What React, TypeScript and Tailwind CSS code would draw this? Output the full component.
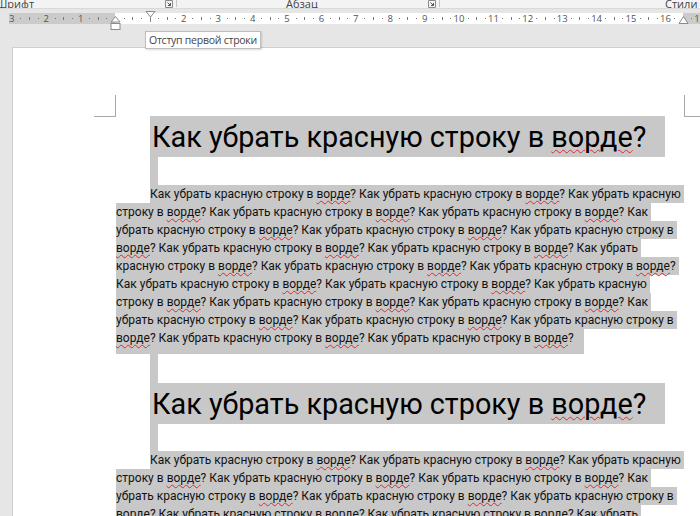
import React from 'react';

const SEL = 'bg-[#c8c8c8]';

const para = [
  'Как убрать красную строку в ворде? Как убрать красную строку в ворде? Как убрать красную',
  'строку в ворде? Как убрать красную строку в ворде? Как убрать красную строку в ворде? Как',
  'убрать красную строку в ворде? Как убрать красную строку в ворде? Как убрать красную строку в',
  'ворде? Как убрать красную строку в ворде? Как убрать красную строку в ворде? Как убрать',
  'красную строку в ворде? Как убрать красную строку в ворде? Как убрать красную строку в ворде?',
  'Как убрать красную строку в ворде? Как убрать красную строку в ворде? Как убрать красную',
  'строку в ворде? Как убрать красную строку в ворде? Как убрать красную строку в ворде? Как',
  'убрать красную строку в ворде? Как убрать красную строку в ворде? Как убрать красную строку в',
  'ворде? Как убрать красную строку в ворде? Как убрать красную строку в ворде?',
];

// spell-check squiggle under "ворде"
function Spell({ text }: { text: string }) {
  return (
    <>
      {text.split(/(ворде)/).map((part, i) =>
        part === 'ворде' ? (
          <span key={i} className="underline decoration-wavy decoration-[#e0282e] decoration-[1px] underline-offset-[2px]">
            {part}
          </span>
        ) : (
          <span key={i}>{part}</span>
        )
      )}
    </>
  );
}

function Heading() {
  return (
    <div className={`ml-[34px] w-fit h-[41px] pl-[2px] pr-[19px] pt-[2px] ${SEL} text-[28.8px] leading-[38px] font-normal text-black whitespace-nowrap`}>
      <Spell text="Как убрать красную строку в ворде?" />
    </div>
  );
}

function EmptyPara({ h }: { h: 'a' | 'b' | 'c' }) {
  const cls = h === 'a' ? 'h-[28px]' : h === 'b' ? 'h-[29px]' : 'h-[27px]';
  return (
    <div className={cls}>
      <div className={`ml-[34px] w-[8px] h-full ${SEL}`} />
    </div>
  );
}

function Body({ lines }: { lines: string[] }) {
  return (
    <div className="text-[12px] text-[#111]">
      {lines.map((l, i) => {
        const first = i === 0;
        const last = i === lines.length - 1 && lines.length === para.length;
        return (
          <div
            key={i}
            className={`w-fit whitespace-nowrap leading-[18px] ${SEL} ${first ? 'ml-[34px]' : ''} ${last ? 'h-[25px] pr-[10px]' : 'h-[18px] pr-[3px]'}`}
          >
            <Spell text={l} />
          </div>
        );
      })}
    </div>
  );
}

const CM = 34.4;
const ORIGIN = 115;

function Ruler() {
  const marks: React.ReactNode[] = [];
  for (let n = -3; n <= 17; n++) {
    const x = ORIGIN + CM * n;
    if (n !== 0 && n !== 1) {
      marks.push(
        <span
          key={`n${n}`}
          className="absolute top-0 -translate-x-1/2 text-[9.5px] leading-[11px] text-[#555]"
          style={{ left: x }}
        >
          {Math.abs(n)}
        </span>
      );
    }
    [0.25, 0.5, 0.75].forEach((q) => {
      const tx = ORIGIN + CM * (n + q);
      if (tx < 12 || tx > 698 || Math.abs(tx - 683) < 5) return;
      marks.push(
        q === 0.5 ? (
          <span key={`t${n}${q}`} className="absolute top-[4px] w-px h-[3px] bg-[#777]" style={{ left: Math.round(tx) }} />
        ) : (
          <span key={`t${n}${q}`} className="absolute top-[5px] w-px h-px bg-[#777]" style={{ left: Math.round(tx) }} />
        )
      );
    });
  }
  return (
    <div className="relative h-[38px] bg-[#e6e6e6]">
      <div className="flex mt-[4px] h-[11px]">
        <div className="w-[9px]" />
        <div className="w-[106px] bg-[#cbcbcb]" />
        <div className="w-[568px] bg-white" />
        <div className="flex-1 bg-[#cbcbcb]" />
      </div>
      <div className="absolute left-0 top-[4px] w-full h-[11px]">{marks}</div>

      {/* left indent / hanging indent */}
      <svg className="absolute left-[110px] top-[7px]" width="11" height="15" viewBox="0 0 11 15">
        <path d="M5.5 0.5 L10 6 L1 6 Z" fill="#fff" stroke="#8a8a8a" />
        <rect x="1" y="7.5" width="9" height="6" fill="#fff" stroke="#8a8a8a" />
      </svg>
      {/* first line indent */}
      <svg className="absolute left-[145px] top-[2px]" width="11" height="12" viewBox="0 0 11 12">
        <path d="M1 0.5 L10 0.5 L5.5 6 Z" fill="#fff" stroke="#8a8a8a" />
        <path d="M5.5 6 V11" stroke="#8a8a8a" />
      </svg>
      {/* right indent */}
      <svg className="absolute left-[678px] top-[7px]" width="11" height="9" viewBox="0 0 11 9">
        <path d="M5.5 0.5 L10 7.5 L1 7.5 Z" fill="#fff" stroke="#8a8a8a" />
      </svg>
    </div>
  );
}

function Launcher() {
  return (
    <svg width="8" height="8" viewBox="0 0 8 8">
      <path d="M0.5 0.5 H7.5 V7.5 H0.5 Z" fill="none" stroke="#8a8a8a" />
      <path d="M2.5 2.5 L5.5 5.5 M3 5.5 H5.5 V3" fill="none" stroke="#555" />
    </svg>
  );
}

function GroupLabels() {
  return (
    <div className="h-[9px] overflow-hidden bg-[#f3f3f3] border-b border-[#d9d9d9] text-[11px] leading-[11px] text-[#444]">
      <div className="flex items-start -mt-[2px] h-[12px]">
        <span className="-ml-[4px] w-[169px]">Шрифт</span>
        <div className="mt-[2px] w-[8px]"><Launcher /></div>
        <div className="ml-[3px] mt-[2px] w-px h-[7px] bg-[#c8c8c8]" />
        <span className="ml-[109px] w-[142px]">Абзац</span>
        <div className="mt-[2px] w-[8px]"><Launcher /></div>
        <div className="ml-[3px] mt-[2px] w-px h-[7px] bg-[#c8c8c8]" />
        <span className="ml-[225px]">Стили</span>
      </div>
    </div>
  );
}

export default function App() {
  return (
    <div
      className="relative w-[700px] h-[516px] overflow-hidden bg-[#e6e6e6] flex flex-col"
      style={{ fontFamily: '"Open Sans", "Noto Sans", sans-serif' }}
    >
      <GroupLabels />
      <Ruler />

      <div className="relative ml-[12px] flex-1 bg-white border-l border-t border-[#cfcfcf] overflow-hidden">
        {/* crop marks */}
        <div className="absolute left-[81px] top-[47px] w-[22px] h-[22px] border-r border-b border-[#a8a8a8]" />
        <div className="absolute left-[671px] top-[47px] w-[30px] h-[22px] border-l border-b border-[#a8a8a8]" />

        <div className="pl-[103px] pt-[68px]" style={{ fontFamily: 'Roboto, "Noto Sans", sans-serif' }}>
          <Heading />
          <EmptyPara h="a" />
          <Body lines={para} />
          <EmptyPara h="b" />
          <Heading />
          <EmptyPara h="c" />
          <Body lines={para.slice(0, 5)} />
        </div>
      </div>

      {/* tooltip */}
      <div className="absolute left-[145px] top-[31px] h-[18px] px-[3px] bg-white border border-[#bdbdbd] shadow-[1px_1px_2px_rgba(0,0,0,0.15)] text-[10.5px] tracking-[-0.25px] leading-[16px] text-[#444] whitespace-nowrap">
        Отступ первой строки
      </div>
    </div>
  );
}
